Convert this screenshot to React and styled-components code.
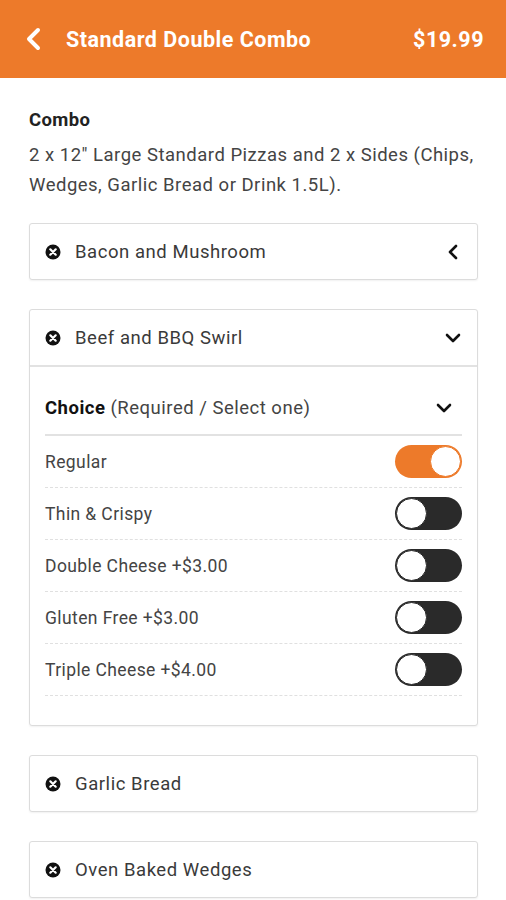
import React, { useState } from "react";
import styled, { createGlobalStyle } from "styled-components";

const GlobalStyle = createGlobalStyle`
  body {
    margin: 0;
    background: #ffffff;
    font-family: Roboto, "Liberation Sans", Arial, sans-serif;
  }
`;

const Page = styled.div`
  width: 506px;
  min-height: 900px;
  background: #fff;
`;

const TopBar = styled.div`
  display: flex;
  align-items: center;
  height: 78px;
  padding: 0 22px 0 24px;
  background-color: #ed7a2a;
  color: white;
  box-sizing: border-box;
`;

const BackBtn = styled.div`
  display: flex;
  align-items: center;
  width: 42px;
`;

const Title = styled.div`
  flex: 1;
  font-size: 21.5px;
  letter-spacing: 0.5px;
  font-weight: bold;
`;

const Price = styled.div`
  font-size: 21.5px;
  letter-spacing: 0.5px;
  font-weight: bold;
`;

const Content = styled.div`
  padding: 30px 28px 20px 29px;
`;

const ComboTitle = styled.div`
  font-size: 18.5px;
  letter-spacing: 0.4px;
  font-weight: bold;
  color: #222;
  line-height: 24px;
`;

const ComboText = styled.div`
  margin-top: 8px;
  font-size: 18.5px;
  letter-spacing: 0.5px;
  line-height: 30px;
  color: #444;
`;

const Card = styled.div`
  margin-top: ${(props) => props.top || 29}px;
  border: 1px solid #dcdcdc;
  border-radius: 3px;
  box-shadow: 0 1px 2px rgba(0, 0, 0, 0.06);
  background: #fff;
`;

const CardHead = styled.div`
  display: flex;
  align-items: center;
  height: 55px;
  padding: 0 16px 0 15px;
  border-bottom: ${(props) => (props.open ? "2px solid #e2e2e2" : "none")};
`;

const CardLabel = styled.div`
  flex: 1;
  margin-left: 14px;
  font-size: 18.5px;
  letter-spacing: 0.55px;
  color: #3a3a3a;
`;

const CardBody = styled.div`
  padding: 0 15px 29px 15px;
`;

const ChoiceHead = styled.div`
  display: flex;
  align-items: center;
  padding: 29px 10px 14px 0;
  border-bottom: 2px solid #e2e2e2;
  font-size: 18.5px;
  letter-spacing: 0.5px;
  line-height: 24px;
  color: #444;
  b {
    color: #111;
  }
`;

const ChoiceText = styled.div`
  flex: 1;
`;

const OptionRow = styled.div`
  display: flex;
  align-items: center;
  justify-content: space-between;
  height: 51px;
  border-bottom: 1px dashed #e0e0e0;
  font-size: 17.5px;
  letter-spacing: 0.4px;
  color: #444;
`;

const Toggle = styled.button`
  position: relative;
  width: 67px;
  height: 33px;
  padding: 0;
  border: none;
  border-radius: 17px;
  background-color: ${(props) => (props.on ? "#ed7a2a" : "#2a2a2a")};
  cursor: pointer;
`;

const Knob = styled.span`
  position: absolute;
  top: 1px;
  left: ${(props) => (props.on ? "35px" : "1px")};
  width: 29px;
  height: 29px;
  border-radius: 50%;
  background: #fff;
  border: 1px solid ${(props) => (props.on ? "#ed7a2a" : "#2a2a2a")};
`;

const XIcon = () => (
  <svg width="16" height="16" viewBox="0 0 16 16">
    <circle cx="8" cy="8" r="7.5" fill="#111" />
    <path d="M5.3 5.3 L10.7 10.7 M10.7 5.3 L5.3 10.7" stroke="#fff" strokeWidth="2.2" strokeLinecap="round" />
  </svg>
);

const Chevron = ({ dir = "down", color = "#111", size = 14 }) => {
  const d = {
    down: "M2 5 L8 11 L14 5",
    left: "M11 2 L5 8 L11 14",
  }[dir];
  return (
    <svg width={size} height={size} viewBox="0 0 16 16">
      <path d={d} fill="none" stroke={color} strokeWidth="2.6" strokeLinecap="round" strokeLinejoin="round" />
    </svg>
  );
};

const options = [
  "Regular",
  "Thin & Crispy",
  "Double Cheese +$3.00",
  "Gluten Free +$3.00",
  "Triple Cheese +$4.00",
];

const App = () => {
  const [selected, setSelected] = useState(0);

  return (
    <Page>
      <GlobalStyle />
      <TopBar>
        <BackBtn>
          <svg width="20" height="26" viewBox="0 0 20 26">
            <path d="M14 4 L5 13 L14 22" fill="none" stroke="#fff" strokeWidth="4" strokeLinecap="round" strokeLinejoin="round" />
          </svg>
        </BackBtn>
        <Title>Standard Double Combo</Title>
        <Price>$19.99</Price>
      </TopBar>
      <Content>
        <ComboTitle>Combo</ComboTitle>
        <ComboText>
          2 x 12" Large Standard Pizzas and 2 x Sides (Chips, Wedges, Garlic Bread or Drink 1.5L).
        </ComboText>

        <Card top={23}>
          <CardHead>
            <XIcon />
            <CardLabel>Bacon and Mushroom</CardLabel>
            <Chevron dir="left" size={16} />
          </CardHead>
        </Card>

        <Card>
          <CardHead open>
            <XIcon />
            <CardLabel>Beef and BBQ Swirl</CardLabel>
            <Chevron dir="down" size={16} />
          </CardHead>
          <CardBody>
            <ChoiceHead>
              <ChoiceText>
                <b>Choice</b> (Required / Select one)
              </ChoiceText>
              <Chevron dir="down" size={16} />
            </ChoiceHead>
            {options.map((opt, i) => (
              <OptionRow key={opt}>
                <span>{opt}</span>
                <Toggle on={i === selected} onClick={() => setSelected(i)}>
                  <Knob on={i === selected} />
                </Toggle>
              </OptionRow>
            ))}
          </CardBody>
        </Card>

        <Card>
          <CardHead>
            <XIcon />
            <CardLabel>Garlic Bread</CardLabel>
          </CardHead>
        </Card>

        <Card>
          <CardHead>
            <XIcon />
            <CardLabel>Oven Baked Wedges</CardLabel>
          </CardHead>
        </Card>
      </Content>
    </Page>
  );
};

export default App;
